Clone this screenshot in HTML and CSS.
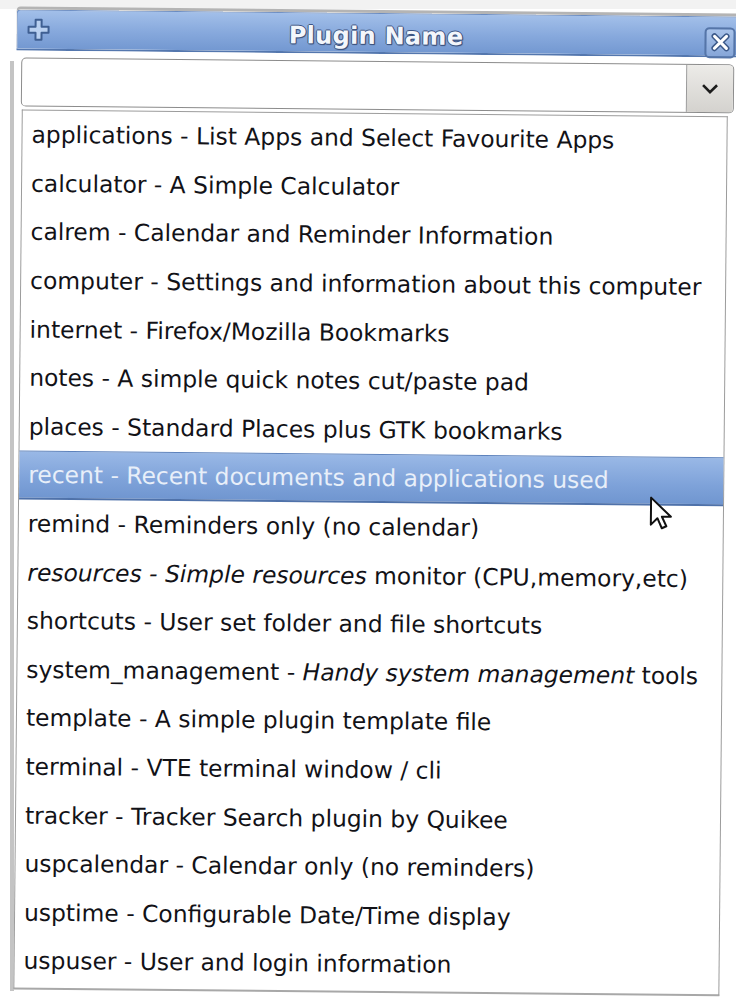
FILE: index.html
```html
<!DOCTYPE html>
<html>
<head>
<meta charset="utf-8">
<link rel="stylesheet" href="styles.css">
</head>
<body>
<div class="page">
  <div class="edge"><div class="edge-line"></div></div>
  <div class="window">
    <div class="titlebar">
      <svg class="plus" width="26" height="26" viewBox="0 0 26 26">
        <path d="M10 3h6v7h7v6h-7v7h-6v-7H3v-6h7z" fill="#b9d0f0" stroke="#3f5f92" stroke-width="2" stroke-linejoin="round"/>
      </svg>
      <div class="title">Plugin Name</div>
      <div class="close">
        <svg width="22" height="22" viewBox="0 0 22 22">
          <path d="M5 5L17 17M17 5L5 17" stroke="#3d5a8a" stroke-width="6" stroke-linecap="round"/>
          <path d="M5 5L17 17M17 5L5 17" stroke="#ffffff" stroke-width="3" stroke-linecap="round"/>
        </svg>
      </div>
    </div>
    <div class="combo">
      <div class="entry"></div>
      <div class="button">
        <svg width="22" height="14" viewBox="0 0 22 14"><path d="M4 3l7 7 7-7" fill="none" stroke="#1c1c1c" stroke-width="2.6"/></svg>
      </div>
    </div>
    <div class="list">
      <div class="row"><span>applications - List Apps and Select Favourite Apps</span></div>
      <div class="row"><span>calculator - A Simple Calculator</span></div>
      <div class="row"><span>calrem - Calendar and Reminder Information</span></div>
      <div class="row"><span>computer - Settings and information about this computer</span></div>
      <div class="row"><span>internet - Firefox/Mozilla Bookmarks</span></div>
      <div class="row"><span>notes - A simple quick notes cut/paste pad</span></div>
      <div class="row"><span>places - Standard Places plus GTK bookmarks</span></div>
      <div class="row selected"><span>recent - Recent documents and applications used</span>
        <svg class="cursor" width="26" height="36" viewBox="0 0 26 36">
          <path d="M2 2v27l6.5-6.5 4.5 10 4.5-2-4.5-9.5h9z" fill="#ffffff" stroke="#111111" stroke-width="2" stroke-linejoin="round"/>
        </svg>
      </div>
      <div class="row"><span>remind - Reminders only (no calendar)</span></div>
      <div class="row"><span><i class="it">resources - Simple resources</i> monitor (CPU,memory,etc)</span></div>
      <div class="row"><span>shortcuts - User set folder and file shortcuts</span></div>
      <div class="row"><span>system_management - <i class="it">Handy system management</i> tools</span></div>
      <div class="row"><span>template - A simple plugin template file</span></div>
      <div class="row"><span>terminal - VTE terminal window / cli</span></div>
      <div class="row"><span>tracker - Tracker Search plugin by Quikee</span></div>
      <div class="row"><span>uspcalendar - Calendar only (no reminders)</span></div>
      <div class="row"><span>usptime - Configurable Date/Time display</span></div>
      <div class="row"><span>uspuser - User and login information</span></div>
    </div>
  </div>
</div>
</body>
</html>
```
FILE: styles.css
```css
html, body {
  margin: 0;
  padding: 0;
  background: #ffffff;
}
body {
  width: 736px;
  height: 1000px;
  overflow: hidden;
  font-family: "DejaVu Sans", Verdana, sans-serif;
}
.page {
  display: flex;
  height: 1000px;
  border-top: 9px solid #f2f2f2;
  box-sizing: border-box;
}
.edge {
  width: 16px;
  flex: none;
  display: flex;
  padding-left: 10px;
  box-sizing: border-box;
}
.edge-line {
  width: 4px;
  margin-top: 52px;
  height: 930px;
  background: #c4c4c4;
}
.window {
  width: 720px;
  flex: none;
  margin-top: 4px;
  display: flex;
  flex-direction: column;
  transform: rotate(0.55deg);
  transform-origin: 50% 50%;
}
.titlebar {
  height: 41px;
  margin-left: -4px;
  box-sizing: border-box;
  display: flex;
  align-items: center;
  background: linear-gradient(#a2bfe9, #86a8dc 55%, #7398d1);
  border: 1px solid #6a8cc2;
  border-bottom: 2px solid #5477ae;
  border-radius: 4px 4px 0 0;
  padding: 0 4px 0 8px;
  box-shadow: 0 -3px 0 #b4b4b4;
}
.plus {
  flex: none;
}
.title {
  flex: 1;
  text-align: center;
  font-weight: bold;
  font-size: 24px;
  color: #f3f6fb;
  letter-spacing: 0.3px;
  text-shadow: 1px 0 0 #3e5583, -1px 0 0 #3e5583, 0 1px 0 #3e5583, 0 -1px 0 #3e5583, 1px 1px 1px #2e4066;
  margin-left: 4px;
  margin-right: 8px;
  padding-top: 5px;
}
.close {
  width: 31px;
  height: 31px;
  flex: none;
  margin-top: 12px;
  box-sizing: border-box;
  border: 2px solid #5575a8;
  border-radius: 5px;
  background: linear-gradient(#a9c3ea, #86a6d8);
  display: flex;
  align-items: center;
  justify-content: center;
}
.combo {
  display: flex;
  height: 49px;
  margin: 7px 6px 0 1px;
  box-sizing: border-box;
  border: 1px solid #8c8c8c;
  border-radius: 5px;
  background: #ffffff;
  overflow: hidden;
}
.entry {
  flex: 1;
}
.button {
  width: 46px;
  flex: none;
  border-left: 1px solid #9a9a9a;
  background: linear-gradient(#ecebe8, #d4d2ce);
  display: flex;
  align-items: center;
  justify-content: center;
}
.list {
  margin: 3px 12px 0 2px;
  border: 1px solid #9c9c9c;
  border-bottom: 2px solid #a8a8a8;
  background: #ffffff;
  display: flex;
  flex-direction: column;
  padding: 0 0 2px 0;
}
.row {
  height: 48.6px;
  box-sizing: border-box;
  display: flex;
  align-items: center;
  padding-left: 9px;
  font-size: 23.4px;
  color: #121217;
  white-space: nowrap;
  position: relative;
}
.it {
  font-style: italic;
}
.selected {
  color: #e8eff9;
  background: linear-gradient(#99b8e6, #7ea2d9 60%, #7096d0);
  border-top: 1px solid #5d82bc;
  border-bottom: 2px solid #4f72aa;
}
.cursor {
  position: absolute;
  left: 630px;
  top: 38px;
}
```
